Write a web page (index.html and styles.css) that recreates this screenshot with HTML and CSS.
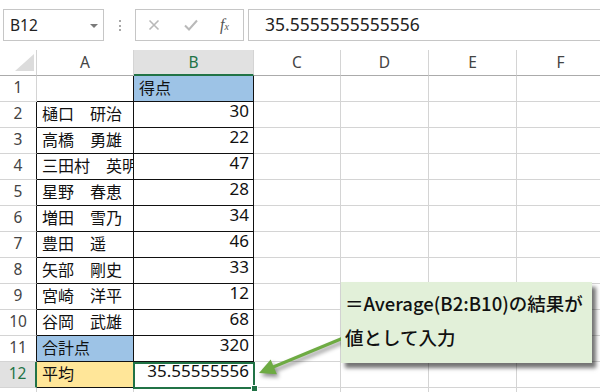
FILE: index.html
```html
<!DOCTYPE html>
<html lang="ja">
<head>
    <meta charset="UTF-8">
    <title>AVERAGE関数</title>
    <link rel="stylesheet" href="styles.css">
</head>
<body>
    <div class="formula-bar">
        <div class="name-box"><span>B12</span><span class="caret"></span></div>
        <div class="grip"><span></span></div>
        <div class="fx-box">
            <svg class="icon-x" width="12" height="12" viewBox="0 0 12 12"><path d="M1.5 1.5l9 9M10.5 1.5l-9 9" stroke="#b9b9b9" stroke-width="1.6" fill="none"/></svg>
            <svg class="icon-ok" width="14" height="12" viewBox="0 0 14 12"><path d="M1 6.5l4 4L13 1.5" stroke="#b9b9b9" stroke-width="2" fill="none"/></svg>
            <span class="fx">f<sub>x</sub></span>
        </div>
        <div class="formula-input">35.5555555555556</div>
    </div>

    <div class="sheet">
        <div class="grid">
            <div class="corner"><svg width="22" height="19" viewBox="0 0 22 19"><path d="M21 1V18H2Z" fill="#dcdcdc"/></svg></div>
            <div class="ch">A</div><div class="ch active">B</div><div class="ch">C</div><div class="ch">D</div><div class="ch">E</div><div class="ch">F</div>

            <div class="rh first">1</div><div class="c a1"></div><div class="c bx blue name">得点</div><div class="c"></div><div class="c"></div><div class="c"></div><div class="c"></div>
            <div class="rh">2</div><div class="c bx name">樋口　研治</div><div class="c bx num">30</div><div class="c"></div><div class="c"></div><div class="c"></div><div class="c"></div>
            <div class="rh">3</div><div class="c bx name">高橋　勇雄</div><div class="c bx num">22</div><div class="c"></div><div class="c"></div><div class="c"></div><div class="c"></div>
            <div class="rh">4</div><div class="c bx name clip">三田村　英明</div><div class="c bx num">47</div><div class="c"></div><div class="c"></div><div class="c"></div><div class="c"></div>
            <div class="rh">5</div><div class="c bx name">星野　春恵</div><div class="c bx num">28</div><div class="c"></div><div class="c"></div><div class="c"></div><div class="c"></div>
            <div class="rh">6</div><div class="c bx name">増田　雪乃</div><div class="c bx num">34</div><div class="c"></div><div class="c"></div><div class="c"></div><div class="c"></div>
            <div class="rh">7</div><div class="c bx name">豊田　遥</div><div class="c bx num">46</div><div class="c"></div><div class="c"></div><div class="c"></div><div class="c"></div>
            <div class="rh">8</div><div class="c bx name">矢部　剛史</div><div class="c bx num">33</div><div class="c"></div><div class="c"></div><div class="c"></div><div class="c"></div>
            <div class="rh">9</div><div class="c bx name">宮崎　洋平</div><div class="c bx num">12</div><div class="c"></div><div class="c"></div><div class="c"></div><div class="c"></div>
            <div class="rh">10</div><div class="c bx name">谷岡　武雄</div><div class="c bx num">68</div><div class="c"></div><div class="c"></div><div class="c"></div><div class="c"></div>
            <div class="rh">11</div><div class="c bx blue name">合計点</div><div class="c bx num">320</div><div class="c"></div><div class="c"></div><div class="c"></div><div class="c"></div>
            <div class="rh active">12</div><div class="c bx yellow name">平均</div><div class="c bx num">35.55555556</div><div class="c"></div><div class="c"></div><div class="c"></div><div class="c"></div>
            <div class="rh last"></div><div class="c"></div><div class="c"></div><div class="c"></div><div class="c"></div><div class="c"></div><div class="c"></div>
        </div>

        <div class="selection"></div>
        <div class="fill-handle"></div>

        <svg class="arrow" width="600" height="342" viewBox="0 0 600 342">
            <path d="M342 288.6L272 317.6" stroke="#6eab43" stroke-width="3.2" fill="none"/>
            <path d="M259 323L270.7 309.5L276.9 324.3Z" fill="#6eab43"/>
        </svg>

        <div class="callout">
            <div>＝Average(B2:B10)の結果が</div>
            <div>値として入力</div>
        </div>
    </div>
</body>
</html>
```

FILE: styles.css
```css
body {
    margin: 0;
    width: 600px;
    height: 392px;
    overflow: hidden;
    background: #fff;
    font-family: "Noto Sans", "Noto Sans CJK JP", sans-serif;
    color: #111;
}

/* formula bar */
.formula-bar {
    display: flex;
    align-items: center;
    padding-top: 9px;
    height: 32px;
    width: 600px;
}
.name-box {
    margin-left: 3px;
    width: 101px;
    height: 32px;
    box-sizing: border-box;
    border: 1px solid #c6c6c6;
    display: flex;
    align-items: center;
    justify-content: space-between;
    padding: 0 5px 0 6px;
    font-size: 15.5px;
    color: #222;
}
.caret {
    border-left: 4px solid transparent;
    border-right: 4px solid transparent;
    border-top: 4px solid #7a7a7a;
    margin-top: 1px;
}
.grip {
    width: 31px;
    display: flex;
    justify-content: center;
}
.grip span {
    width: 0;
    height: 11px;
    border-left: 2px dotted #a8a8a8;
}
.fx-box {
    width: 109px;
    height: 32px;
    box-sizing: border-box;
    border: 1px solid #c6c6c6;
    display: flex;
    align-items: center;
    padding-left: 12px;
}
.icon-ok {
    margin-left: 24px;
}
.fx {
    margin-left: 22px;
    font-family: "Liberation Serif", serif;
    font-style: italic;
    font-size: 16px;
    color: #555;
}
.fx sub {
    font-size: 10px;
    vertical-align: 0;
}
.formula-input {
    margin-left: 4px;
    flex: 1;
    height: 32px;
    box-sizing: border-box;
    border: 1px solid #c6c6c6;
    border-right: none;
    padding-left: 16px;
    font-size: 17.5px;
    line-height: 29px;
    color: #222;
}

/* sheet */
.sheet {
    position: relative;
    margin-top: 9px;
    width: 600px;
    height: 342px;
    overflow: hidden;
}
.grid {
    display: grid;
    grid-template-columns: 37px 97px 120px 87px 88px 88px 88px;
    grid-auto-rows: 26px;
}
.grid > div {
    box-sizing: border-box;
}
.corner {
    border-right: 1px solid #d4d4d4;
    border-bottom: 1px solid #ababab;
    display: flex;
    align-items: flex-end;
    justify-content: flex-end;
    padding: 0 1px 3px 0;
}
.ch {
    border-right: 1px solid #d4d4d4;
    border-bottom: 1px solid #ababab;
    text-align: center;
    font-size: 15.5px;
    line-height: 25px;
    color: #444;
}
.ch.active {
    background: #e1e1e1;
    color: #217346;
    border-bottom: 2px solid #217346;
}
.rh {
    border-right: 1px solid #111;
    border-bottom: 1px solid #d4d4d4;
    text-align: center;
    font-size: 15.5px;
    line-height: 23px;
    color: #444;
}
.rh.first,
.rh.last {
    border-right-color: #d4d4d4;
}
.rh.active {
    background: #e1e1e1;
    color: #217346;
    border-right: 2px solid #217346;
}
.c {
    border-right: 1px solid #d4d4d4;
    border-bottom: 1px solid #d4d4d4;
    font-size: 16px;
    line-height: 22px;
    white-space: nowrap;
}
.c.clip {
    overflow: hidden;
}
.c.a1,
.c.bx {
    border-right-color: #111;
    border-bottom-color: #111;
}
.name {
    padding: 1px 0 0 5px;
}
.num {
    text-align: right;
    padding: 0 4px 0 0;
    margin-top: -2px;
    font-size: 17px;
}
.blue {
    background: #9dc3e6;
}
.yellow {
    background: #ffe699;
}

/* overlays */
.selection {
    position: absolute;
    left: 133px;
    top: 312px;
    width: 122px;
    height: 27px;
    box-sizing: border-box;
    border: 2px solid #217346;
}
.fill-handle {
    position: absolute;
    left: 251px;
    top: 335px;
    width: 5px;
    height: 5px;
    background: #217346;
    border: 1px solid #fff;
}
.arrow {
    position: absolute;
    left: 0;
    top: 0;
    filter: drop-shadow(2px 3px 2px rgba(0, 0, 0, 0.45));
}
.callout {
    position: absolute;
    left: 341px;
    top: 232px;
    width: 251px;
    height: 81px;
    box-sizing: border-box;
    padding: 4px 0 0 4px;
    background: #e2f0d9;
    box-shadow: 4px 5px 4px rgba(0, 0, 0, 0.55);
    font-family: "Noto Sans CJK JP", sans-serif;
    font-size: 18.5px;
    font-weight: 500;
    line-height: 34px;
    color: #111;
}
```
